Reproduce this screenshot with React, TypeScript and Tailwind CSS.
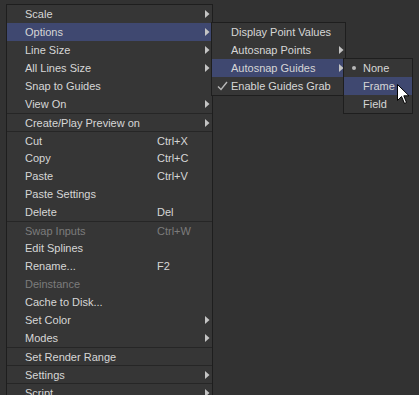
import React from "react";

type Item = {
  label: string;
  shortcut?: string;
  arrow?: boolean;
  sep?: boolean;
  disabled?: boolean;
  active?: boolean;
};

const mainItems: Item[] = [
  { label: "Scale", arrow: true },
  { label: "Options", arrow: true, active: true },
  { label: "Line Size", arrow: true },
  { label: "All Lines Size", arrow: true },
  { label: "Snap to Guides" },
  { label: "View On", arrow: true },
  { label: "Create/Play Preview on", arrow: true, sep: true },
  { label: "Cut", shortcut: "Ctrl+X", sep: true },
  { label: "Copy", shortcut: "Ctrl+C" },
  { label: "Paste", shortcut: "Ctrl+V" },
  { label: "Paste Settings" },
  { label: "Delete", shortcut: "Del" },
  { label: "Swap Inputs", shortcut: "Ctrl+W", sep: true, disabled: true },
  { label: "Edit Splines" },
  { label: "Rename...", shortcut: "F2" },
  { label: "Deinstance", disabled: true },
  { label: "Cache to Disk..." },
  { label: "Set Color", arrow: true },
  { label: "Modes", arrow: true },
  { label: "Set Render Range", sep: true },
  { label: "Settings", arrow: true, sep: true },
  { label: "Script", arrow: true, sep: true },
];

const Arrow = () => (
  <svg width="5" height="8" viewBox="0 0 5 8" className="block">
    <path d="M0 0 L4.5 4 L0 8 Z" fill="#c4c4c4" />
  </svg>
);

const Check = () => (
  <svg width="11" height="10" viewBox="0 0 11 10" className="block">
    <path d="M1 5.5 L4 8.5 L10 1" stroke="#b8b8b8" strokeWidth="1.4" fill="none" />
  </svg>
);

function MainRow({ it }: { it: Item }) {
  return (
    <div
      className={`flex h-[18px] items-center ${it.sep ? "border-t border-[#262626]" : ""} ${
        it.active ? "bg-[#3f4870]" : ""
      }`}
    >
      <span
        className={`w-[150px] shrink-0 pl-[18px] ${it.disabled ? "text-[#7c7c7c]" : "text-[#d6d6d6]"}`}
      >
        {it.label}
      </span>
      <span className={`flex-1 ${it.disabled ? "text-[#7c7c7c]" : "text-[#d6d6d6]"}`}>
        {it.shortcut ?? ""}
      </span>
      <span className="w-[7px] shrink-0">{it.arrow ? <Arrow /> : null}</span>
    </div>
  );
}

export default function App() {
  return (
    <div
      className="relative h-[395px] w-[419px] overflow-hidden bg-[#323232] text-[11px] leading-[18px]"
      style={{ fontFamily: '"Liberation Sans", Arial, sans-serif' }}
    >
      <div className="ml-[6px] mt-[4px] w-[207px] border border-[#1e1e1e] bg-[#363636]">
        {mainItems.map((it) => (
          <MainRow key={it.label} it={it} />
        ))}
      </div>

      {/* Options submenu */}
      <div className="absolute left-[211px] top-[22px] w-[135px] border border-[#1e1e1e] bg-[#363636]">
        {[
          { label: "Display Point Values" },
          { label: "Autosnap Points", arrow: true },
          { label: "Autosnap Guides", arrow: true, active: true },
          { label: "Enable Guides Grab", check: true },
        ].map((it) => (
          <div
            key={it.label}
            className={`flex h-[18px] items-center ${it.active ? "bg-[#3f4870]" : ""}`}
          >
            <span className="flex w-[19px] shrink-0 justify-end pr-[3px]">
              {"check" in it && it.check ? <Check /> : null}
            </span>
            <span className="flex-1 text-[#d6d6d6]">{it.label}</span>
            <span className="w-[6px] shrink-0">{"arrow" in it && it.arrow ? <Arrow /> : null}</span>
          </div>
        ))}
      </div>

      {/* Autosnap Guides submenu */}
      <div className="absolute left-[343px] top-[58px] w-[70px] border border-[#1e1e1e] bg-[#363636]">
        {[
          { label: "None", bullet: true },
          { label: "Frame", active: true },
          { label: "Field" },
        ].map((it) => (
          <div
            key={it.label}
            className={`flex h-[18px] items-center ${"active" in it && it.active ? "bg-[#3f4870]" : ""}`}
          >
            <span className="flex w-[19px] shrink-0 justify-center pl-[1px]">
              {"bullet" in it && it.bullet ? (
                <span className="block h-[4px] w-[4px] rounded-full bg-[#b8b8b8]" />
              ) : null}
            </span>
            <span className="flex-1 text-[#d6d6d6]">{it.label}</span>
          </div>
        ))}
      </div>

      {/* mouse cursor */}
      <svg
        className="absolute left-[397px] top-[84px]"
        width="13"
        height="21"
        viewBox="0 0 13 21"
      >
        <path
          d="M0.5 0.5 L0.5 16.5 L4.5 12.5 L7.5 19.5 L9.5 18.5 L6.8 11.8 L12 11.8 Z"
          fill="#ffffff"
          stroke="#000000"
          strokeWidth="1"
          strokeLinejoin="miter"
        />
      </svg>
    </div>
  );
}
